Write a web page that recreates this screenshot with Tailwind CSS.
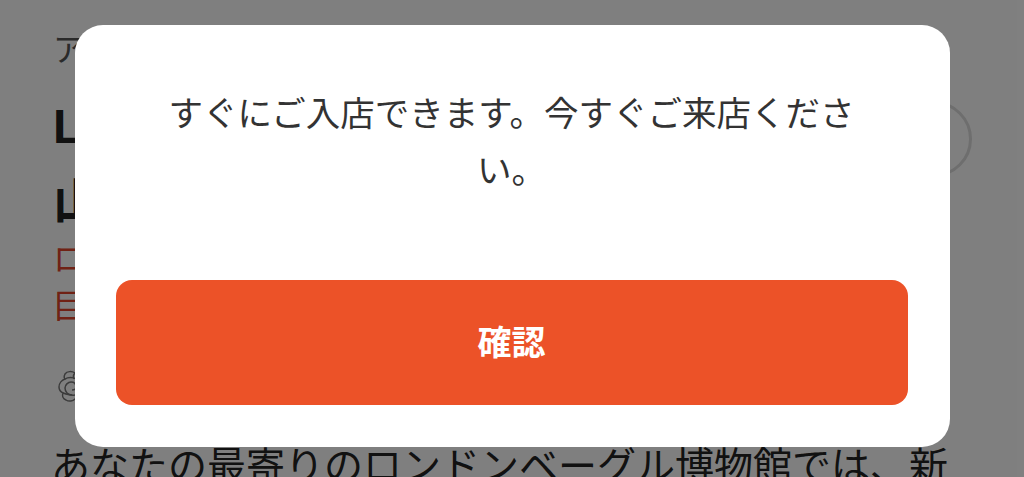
<!DOCTYPE html>
<html lang="ja">
<head>
    <meta charset="UTF-8">
    <meta name="viewport" content="width=device-width, initial-scale=1.0">
    <title>確認</title>
    <script src="https://cdn.jsdelivr.net/npm/@tailwindcss/browser@4"></script>
</head>
<body class="relative h-screen overflow-hidden bg-white font-['Noto_Sans_CJK_JP',sans-serif]">
    <!-- page behind the dialog -->
    <div class="pl-[53px] pr-[52px] pt-[24px]">
        <p class="text-[32px] leading-[46px] text-[#555]">アプリ</p>
        <div class="relative mt-[22px]">
            <h1 class="w-[800px] text-[48px] leading-[70px] font-bold text-[#222] font-['Liberation_Sans','Noto_Sans_CJK_JP',sans-serif]">London Bagel<br><span class="font-['Noto_Sans_CJK_JP',sans-serif]">山</span></h1>
            <div class="absolute right-0 top-[9px] h-[76px] w-[76px] rounded-full border-[3px] border-[#dcdcdc]"></div>
        </div>
        <p class="-mt-[3px] text-[33px] leading-[47px] text-[#e0452a]">ロ<br>巨</p>
        <div class="ml-[5px] mt-[42px] flex h-[34px] items-center">
            <svg class="h-[34px] w-[34px] text-[#777]" viewBox="0 0 34 34" fill="none" stroke="currentColor" stroke-width="1.5">
                <path d="M17 3c-3-2-8-2-10 1-1 2-1 4 0 5-3 1-6 4-6 8 0 3 2 5 4 6-1 3 0 6 3 7 3 2 7 1 9-1 3 1 7 0 9-2 2-2 3-5 2-7 3-2 4-6 3-9-1-3-4-5-6-5 0-3-5-6-8-3z" />
                <path d="M7 9c3-2 8-2 11 0 4 2 6 6 5 10-1 4-5 7-9 6-4 0-7-3-7-7 0-3 3-6 6-6 3 0 5 2 5 5 0 2-2 3-4 3" />
                <path d="M5 23c3 1 6 2 9 2M17 3c-2 2-2 4-1 6" />
            </svg>
        </div>
        <p class="-ml-[2px] mt-[31px] whitespace-nowrap text-[39px] leading-[56px] text-[#222]">あなたの最寄りのロンドンベーグル博物館では、新</p>
    </div>

    <!-- dimmed overlay + dialog -->
    <div class="absolute inset-0 flex items-start justify-center bg-black/50 pt-[25px]">
        <div class="w-[875px] rounded-[28px] bg-white pl-[41px] pr-[42px] pt-[58px] pb-[42px]">
            <p class="px-[44px] text-center text-[34.5px] leading-[57px] text-[#333]">すぐにご入店できます。今すぐご来店ください。</p>
            <button class="mt-[83px] h-[125px] w-full rounded-[16px] bg-[#ec5228] pb-[4px] text-[34px] font-bold text-white">確認</button>
        </div>
    </div>
</body>
</html>
